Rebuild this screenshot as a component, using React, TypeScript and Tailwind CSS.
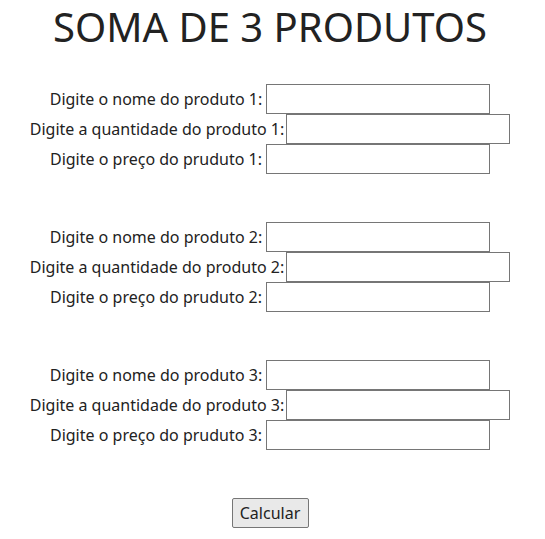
const groups = [1, 2, 3];

const Row = ({ label, tight }: { label: string; tight?: boolean }) => (
  <div className={`flex items-center justify-center h-[30px] ${tight ? "gap-[2px]" : "gap-[4px]"}`}>
    <label className="text-[16px] leading-[30px] text-[#222]">{label}</label>
    <input type="text" className="w-[224px] h-[30px] border border-[#767676] bg-white outline-none" />
  </div>
);

export default function App() {
  return (
    <div className="w-full min-h-[539px] bg-white pr-[5px] font-['Noto_Sans',sans-serif] text-[#222]">
      <h1 className="text-[40px] leading-[54px] text-center text-[#222] font-normal">SOMA DE 3 PRODUTOS</h1>
      <div className="mt-[30px] flex flex-col gap-[48px]">
        {groups.map((n) => (
          <div key={n} className="flex flex-col">
            <Row label={`Digite o nome do produto ${n}:`} />
            <Row label={`Digite a quantidade do produto ${n}:`} tight />
            <Row label={`Digite o preço do pruduto ${n}:`} />
          </div>
        ))}
      </div>
      <div className="mt-[48px] flex justify-center">
        <button className="h-[30px] w-[77px] border border-[#767676] bg-[#e9e9e9] text-[16px] text-[#222] rounded-[2px]">
          Calcular
        </button>
      </div>
    </div>
  );
}
